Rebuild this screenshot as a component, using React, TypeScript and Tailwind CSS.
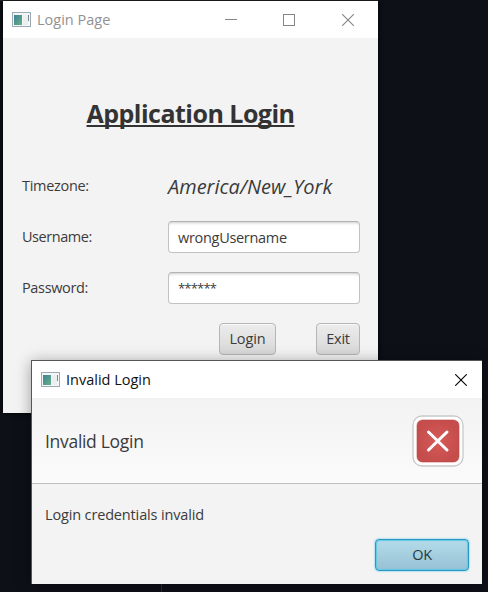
import type { ReactNode } from "react";

function AppIcon() {
  return (
    <svg width="19" height="15" viewBox="0 0 19 15" className="shrink-0" shapeRendering="crispEdges">
      <defs>
        <linearGradient id="pane" x1="0" y1="0" x2="1" y2="1">
          <stop offset="0" stopColor="#427f98" />
          <stop offset="1" stopColor="#62b384" />
        </linearGradient>
      </defs>
      <rect x="0.5" y="0.5" width="18" height="14" fill="#f4f6f7" stroke="#9caab4" />
      <rect x="2" y="3" width="8" height="10" fill="url(#pane)" />
      <rect x="11" y="3" width="5" height="10" fill="#eceff0" />
      <rect x="16" y="3" width="1" height="6" fill="#7c8790" />
    </svg>
  );
}

function Cross({ color }: { color: string }) {
  return (
    <svg width="12" height="12" viewBox="0 0 12 12" className="shrink-0">
      <path d="M.2.2l11.6 11.6M11.8.2L.2 11.8" stroke={color} strokeWidth="1.1" fill="none" />
    </svg>
  );
}

function Field({ children }: { children: ReactNode }) {
  return (
    <div className="flex h-8 w-48 items-center rounded-[4px] border border-[#c2c2c2] border-t-[#b2b2b2] bg-white pl-[9px] pt-px shadow-[inset_0_3px_3px_-2px_#cccccc]">
      {children}
    </div>
  );
}

function FormRow({ label, children }: { label: ReactNode; children: ReactNode }) {
  return (
    <div className="flex h-8 items-center">
      <div className="w-[146px] whitespace-nowrap">{label}</div>
      {children}
    </div>
  );
}

const button =
  "flex h-8 items-center justify-center rounded-[4px] border border-[#b5b5b5] bg-linear-to-b from-[#ececec] to-[#d8d8d8] shadow-[inset_0_1px_0_#f8f8f8]";

export default function App() {
  return (
    <div className="relative h-[592px] w-[488px] overflow-hidden bg-[#0d1017] font-['Open_Sans','Noto_Sans',sans-serif] text-[14.5px] leading-5 text-[#3b3b3b]">
      <div className="absolute left-0 top-0 h-px w-[378px] bg-[#292a2d]" />
      <div className="absolute left-[161px] top-[584px] h-2 w-px bg-[#2a2d32]" />

      <section className="absolute left-[3px] top-px h-[412px] w-[375px] bg-[#f3f3f3] shadow-[0_0_5px_#000000]">
        <header className="flex h-[37px] items-center bg-white pl-[9px] text-[#929292]">
          <AppIcon />
          <span className="ml-1.5">Login Page</span>
          <div className="ml-auto flex items-center pr-6">
            <div className="mr-[46px] h-px w-3 bg-[#858585]" />
            <div className="mr-[47px] size-3 border border-[#858585]" />
            <Cross color="#858585" />
          </div>
        </header>
        <h1 className="mt-[57px] flex h-[36px] items-center justify-center text-[25px] font-bold leading-9 tracking-[-0.52px] text-[#333333] underline decoration-[1.5px] underline-offset-2 [text-decoration-skip-ink:none]">
          Application Login
        </h1>
        <div className="mt-[39px] flex flex-col gap-[19px] pl-[19px]">
          <FormRow label={<span className="tracking-[-0.3px]">Timezone:</span>}>
            <em className="pt-px text-[20px] leading-6">America/New_York</em>
          </FormRow>
          <FormRow label={<span className="tracking-[-0.45px]">Username:</span>}>
            <Field><span className="tracking-[-0.3px]">wrongUsername</span></Field>
          </FormRow>
          <FormRow label={<span className="tracking-[-0.35px]">Password:</span>}>
            <Field><span className="pb-0.5 text-[13px] tracking-[-0.8px]">******</span></Field>
          </FormRow>
          <div className="flex justify-end gap-10 pr-[18px]">
            <div className={`${button} w-[57px]`}><span className="tracking-[-0.1px]">Login</span></div>
            <div className={`${button} w-11`}><span className="tracking-[-0.2px]">Exit</span></div>
          </div>
        </div>
      </section>

      <section className="absolute left-[31px] top-[360px] h-[224px] w-[451px] border-l border-t border-[#555555] bg-[#f3f3f3] shadow-[0_2px_14px_rgba(0,0,0,0.36)]">
        <header className="flex h-[37px] items-center bg-white pl-[9px] text-[#111111]">
          <AppIcon />
          <span className="ml-1.5">Invalid Login</span>
          <div className="ml-auto pr-[15px]"><Cross color="#000000" /></div>
        </header>
        <div className="flex h-[86px] items-center justify-between border-b border-[#bfbfbf] bg-linear-to-b from-[#f2f2f2] to-[#fbfbfb] pl-[13px] pr-[18px]">
          <h2 className="pt-px text-[17.5px] leading-6 tracking-[-0.3px]">Invalid Login</h2>
          <svg width="52" height="52" viewBox="0 0 52 52">
            <defs>
              <radialGradient id="error">
                <stop offset="0" stopColor="#d65b58" />
                <stop offset="1" stopColor="#c54d4c" />
              </radialGradient>
            </defs>
            <rect x="1" y="1" width="50" height="50" rx="9" fill="#ffffff" stroke="#c7c9c9" strokeWidth="1.3" />
            <rect x="5" y="5" width="42" height="42" rx="5.5" fill="url(#error)" stroke="#bc4541" strokeWidth=".6" />
            <path d="M16.5 17l18.5 18M35 17L16.5 35" stroke="#ffffff" strokeWidth="3" strokeLinecap="round" />
          </svg>
        </div>
        <p className="pl-[13px] pt-[21px] tracking-[-0.15px]">Login credentials invalid</p>
        <div className="mt-[14px] flex justify-end pr-[13px]">
          <div className="flex h-8 w-[94px] items-center justify-center rounded-[4px] border-[1.5px] border-[#2898c4] bg-linear-to-b from-[#b3dbea] to-[#97c1d4] text-[#263942] shadow-[0_0_2px_#35bde5,inset_0_0_1px_1px_#65c8e5]">
            <span className="tracking-[-0.4px]">OK</span>
          </div>
        </div>
      </section>
    </div>
  );
}
